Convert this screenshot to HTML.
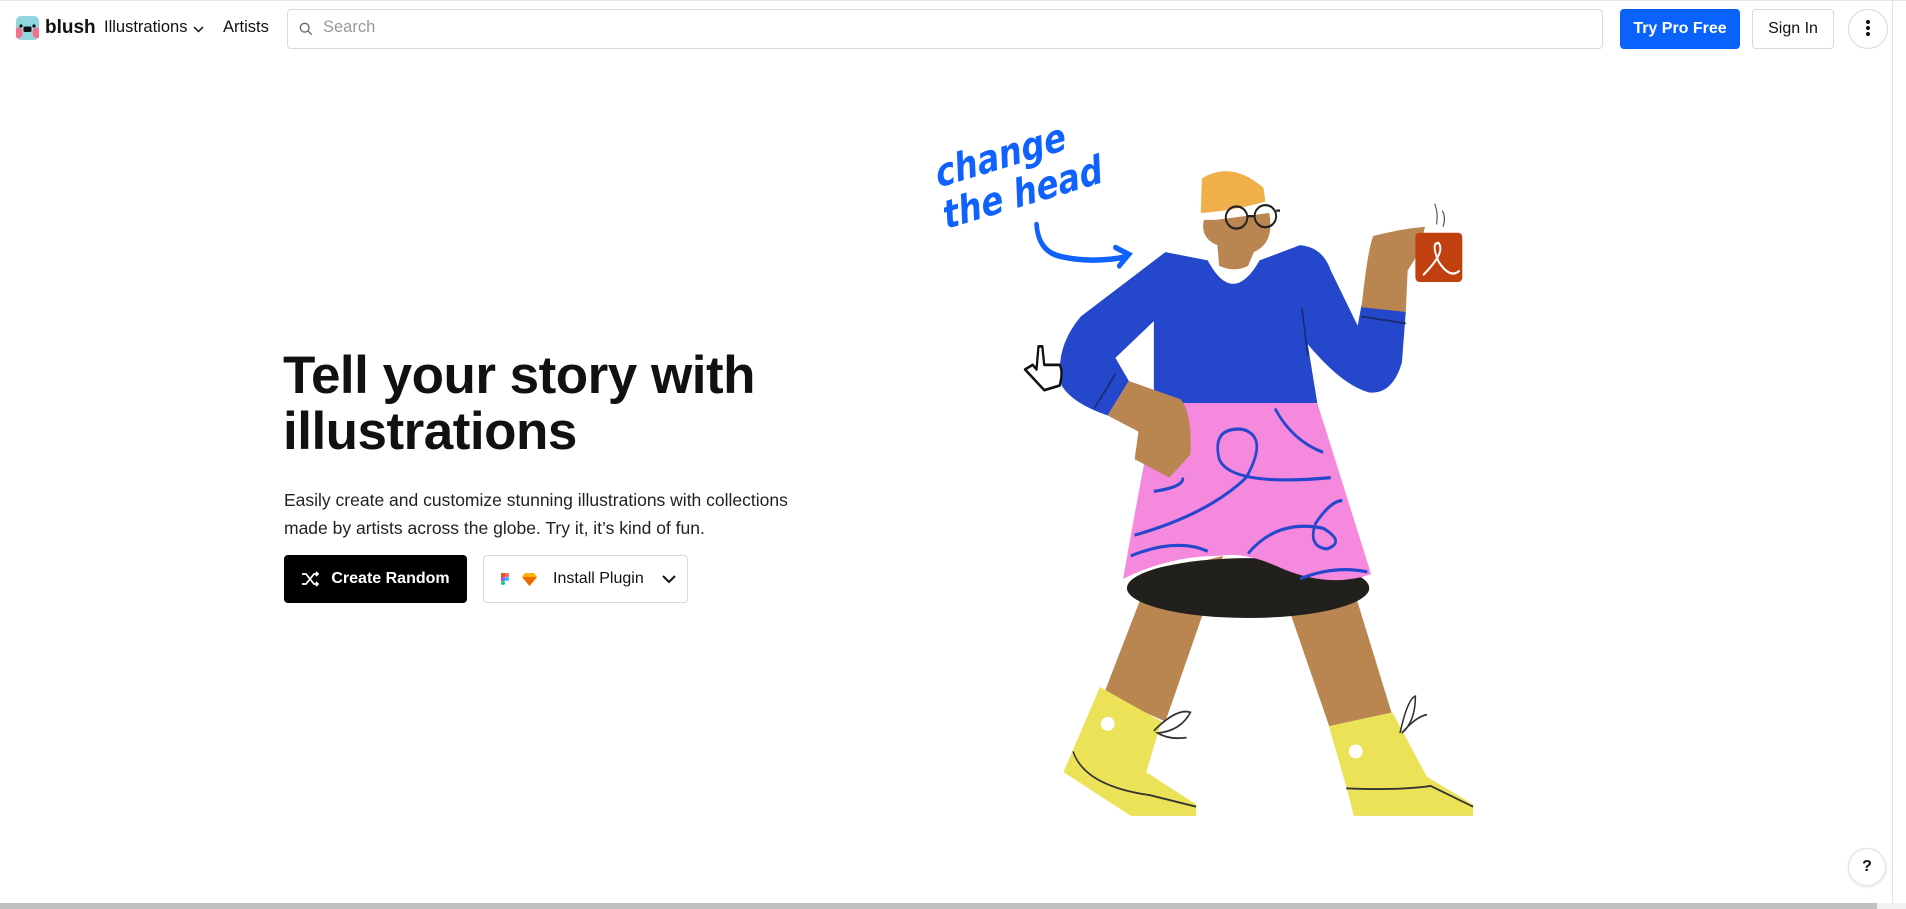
<!DOCTYPE html>
<html><head><meta charset="utf-8"><style>
*{box-sizing:border-box;margin:0;padding:0}
body{width:1906px;height:909px;overflow:hidden;background:#fff;font-family:"Liberation Sans",sans-serif;color:#111;position:relative}
.abs{position:absolute;white-space:nowrap}
.nav{font-size:16.5px;top:18px}
.btn{position:absolute;border-radius:4px;display:flex;align-items:center;justify-content:center;font-weight:bold;font-size:16px}
</style></head><body>
<div class="abs" style="left:0;top:0;width:1906px;height:1px;background:#e3e6ea"></div>
<div class="abs" style="left:1892px;top:0;width:1px;height:903px;background:#e3e3e3"></div>
<svg class="abs" style="left:16px;top:16px" width="23" height="24" viewBox="0 0 23 24"><rect width="23" height="24" rx="5" fill="#8fd6e0"/><ellipse cx="2.5" cy="17" rx="4" ry="5.5" fill="#f2728c"/><ellipse cx="20.5" cy="17" rx="4" ry="5.5" fill="#f2728c"/><circle cx="5" cy="10" r="1.6" fill="#111"/><circle cx="18" cy="10" r="1.6" fill="#111"/><rect x="7.5" y="10.5" width="8" height="5.5" rx="1.5" fill="#111"/></svg>
<div class="abs" style="left:45px;top:17px;font-weight:bold;font-size:19px">blush</div>
<div class="abs nav" style="left:104px">Illustrations</div>
<svg class="abs" style="left:193px;top:26px" width="11" height="7" viewBox="0 0 11 7"><path d="M1 1l4.5 4.5 4.5-4.5" fill="none" stroke="#111" stroke-width="1.5"/></svg>
<div class="abs nav" style="left:223px">Artists</div>
<div class="abs" style="left:287px;top:9px;width:1316px;height:40px;border:1px solid #d6d9dd;border-radius:4px"></div>
<svg class="abs" style="left:299px;top:22px" width="14" height="14" viewBox="0 0 16 16"><circle cx="6.5" cy="6.5" r="5" fill="none" stroke="#666" stroke-width="1.5"/><path d="M10 10l4.5 4.5" stroke="#666" stroke-width="1.5"/></svg>
<div class="abs" style="left:323px;top:18px;font-size:16.5px;color:#999">Search</div>
<div class="btn" style="left:1620px;top:9px;width:120px;height:40px;background:#0a62fc;color:#fff">Try Pro Free</div>
<div class="btn" style="left:1752px;top:9px;width:82px;height:40px;border:1px solid #d6d9dd;font-weight:normal;color:#111">Sign In</div>
<div class="abs" style="left:1848px;top:9px;width:40px;height:40px;border:1px solid #d6d9dd;border-radius:50%"></div>
<div class="abs" style="left:1866px;top:20px;width:4px;height:4px;background:#111;border-radius:50%;box-shadow:0 6px 0 #111,0 12px 0 #111"></div>

<div class="abs" style="left:283px;top:348px;font-size:53px;font-weight:bold;line-height:56px;letter-spacing:-0.5px">Tell your story with<br>illustrations</div>
<div class="abs" style="left:284px;top:486px;font-size:17.5px;line-height:28px;color:#222">Easily create and customize stunning illustrations with collections<br>made by artists across the globe. Try it, it’s kind of fun.</div>
<div class="btn" style="left:284px;top:555px;width:183px;height:48px;background:#000;color:#fff;font-size:16px"><svg width="18" height="16" viewBox="0 0 18 16" style="margin-right:12px"><path d="M1 3h4l8 10h4M1 13h4l8-10h4M15 1l2 2-2 2M15 11l2 2-2 2" fill="none" stroke="#fff" stroke-width="1.7"/></svg>Create Random</div>
<div class="btn" style="left:483px;top:555px;width:205px;height:48px;border:1px solid #d6d9dd;color:#111;font-weight:normal;justify-content:flex-start;padding-left:17px">
<svg width="8" height="12" viewBox="0 0 8 12"><rect x="0" y="0" width="4" height="4" fill="#f24e1e"/><rect x="4" y="0" width="4" height="4" fill="#ff7262"/><rect x="0" y="4" width="4" height="4" fill="#a259ff"/><circle cx="6" cy="6" r="2" fill="#1abcfe"/><rect x="0" y="8" width="4" height="4" rx="2" fill="#0acf83"/></svg>
<svg width="15" height="13" viewBox="0 0 15 13" style="margin-left:13px"><path d="M3 0h9l3 4-7.5 9L0 4z" fill="#fdb300"/><path d="M0 4h15L7.5 13z" fill="#ea6c00"/></svg>
<span style="margin-left:16px;font-size:16px">Install Plugin</span>
<svg width="14" height="9" viewBox="0 0 14 9" style="margin-left:18px"><path d="M1 1l6 6 6-6" fill="none" stroke="#111" stroke-width="2"/></svg></div>

<svg class="abs" style="left:900px;top:114px" width="600" height="718" viewBox="0 0 1560 1560" preserveAspectRatio="none">
<g fill="none" stroke="#0f62fe" stroke-width="12" stroke-linecap="round">
<path d="M355 240 Q360 300 420 310 Q500 325 590 310 M560 290 L595 305 L570 330"/>
</g>
<text x="100" y="160" font-family="DejaVu Sans" font-style="italic" font-weight="bold" font-size="85" fill="#0f62fe" transform="rotate(-14 100 160)">change</text>
<text x="120" y="250" font-family="DejaVu Sans" font-style="italic" font-weight="bold" font-size="85" fill="#0f62fe" transform="rotate(-14 120 250)">the head</text>
<path d="M650 1000 L840 960 L690 1320 L530 1260 Z" fill="#b98651"/>
<path d="M980 1000 L1175 1020 L1285 1320 L1120 1340 Z" fill="#b98651"/>
<ellipse cx="905" cy="1030" rx="315" ry="65" fill="#22201c"/>
<path d="M520 1245 L680 1320 L640 1430 L770 1500 L770 1525 L600 1525 L425 1430 Z" fill="#ebe258"/>
<path d="M1115 1330 L1280 1300 L1370 1440 L1490 1500 L1490 1525 L1180 1525 L1160 1460 Z" fill="#ebe258"/>
<ellipse cx="540" cy="1325" rx="18" ry="15" fill="#fff"/><ellipse cx="1185" cy="1385" rx="18" ry="15" fill="#fff"/>
<g fill="none" stroke="#333" stroke-width="4"><path d="M450 1385 Q480 1460 650 1480 L770 1505"/><path d="M1160 1465 Q1300 1470 1380 1460 L1490 1505"/><path d="M660 1340 Q720 1290 755 1300 Q730 1340 670 1345 Q700 1360 745 1355"/><path d="M1300 1345 Q1320 1270 1340 1265 Q1340 1320 1305 1345 Q1340 1310 1370 1305"/></g>
<path d="M665 628 L1085 628 Q1150 800 1225 1000 Q1120 1030 1000 990 Q900 950 830 960 Q700 960 580 1010 Q620 820 665 628 Z" fill="#f589dd"/>
<g fill="none" stroke="#2447cc" stroke-width="7">
<path d="M610 915 Q800 870 900 790 Q960 700 890 685 Q810 680 830 750 Q860 810 1120 790"/>
<path d="M975 640 Q1020 710 1100 735"/>
<path d="M600 960 Q720 920 800 950"/>
<path d="M905 955 Q980 880 1100 900 Q1160 930 1110 945 Q1060 940 1080 890 Q1120 840 1150 840"/>
<path d="M1040 1010 Q1130 980 1215 995"/>
<path d="M660 820 Q740 810 735 790"/>
</g>
<path d="M690 300 L800 318 Q865 420 935 318 L1040 285 Q1100 290 1120 340 L1190 460 L1200 415 L1315 430 L1305 540 Q1280 610 1220 605 Q1150 590 1060 500 L1085 628 L660 628 L660 450 L560 530 L595 580 L540 655 Q450 630 420 590 Q400 510 470 440 Z" fill="#2447cc"/>
<g fill="none" stroke="#1a2a70" stroke-width="4"><path d="M1045 420 L1060 525"/><path d="M505 640 L560 565"/><path d="M1200 440 L1315 455"/></g>
<path d="M595 580 L730 620 Q760 650 755 740 L700 790 L610 750 L620 690 L540 655 Z" fill="#b98651"/>
<path d="M1200 420 L1315 430 L1320 340 L1350 300 L1365 245 Q1300 250 1230 265 Q1215 300 1200 420 Z" fill="#b98651"/>
<rect x="1340" y="258" width="122" height="107" rx="10" fill="#c0400f"/>
<g fill="none" stroke="#fff" stroke-width="5"><path d="M1360 350 Q1420 300 1400 280 Q1380 280 1400 320 Q1430 360 1455 340"/></g>
<path d="M1390 195 Q1400 215 1395 240 M1410 210 Q1420 225 1412 245" fill="none" stroke="#555" stroke-width="3"/>
<path d="M820 230 L960 215 Q975 280 920 300 L905 330 Q870 345 830 330 L825 285 Q780 270 790 230 Z" fill="#b98651"/>
<path d="M785 140 Q860 100 945 160 L950 190 Q870 210 782 215 Z" fill="#efb04a"/>
<g fill="none" stroke="#222" stroke-width="5"><ellipse cx="875" cy="225" rx="28" ry="24"/><ellipse cx="950" cy="222" rx="28" ry="24"/><path d="M903 222 L922 222 M978 210 L988 210"/></g>
<path d="M360 505 L370 505 L375 545 L415 545 Q425 560 415 590 L375 600 L325 555 L345 545 L355 555 Z" fill="#fff" stroke="#111" stroke-width="6" stroke-linejoin="round"/>
</svg>

<div class="abs" style="left:1848px;top:848px;width:38px;height:38px;border-radius:50%;border:1px solid #e0e0e0;box-shadow:0 1px 3px rgba(0,0,0,.12);display:flex;align-items:center;justify-content:center;font-weight:bold;font-size:16px">?</div>
<div class="abs" style="left:0;top:903px;width:1877px;height:6px;background:#c1c1c1"></div>
<div class="abs" style="left:1877px;top:903px;width:29px;height:6px;background:#f1f1f1"></div>
</body></html>
